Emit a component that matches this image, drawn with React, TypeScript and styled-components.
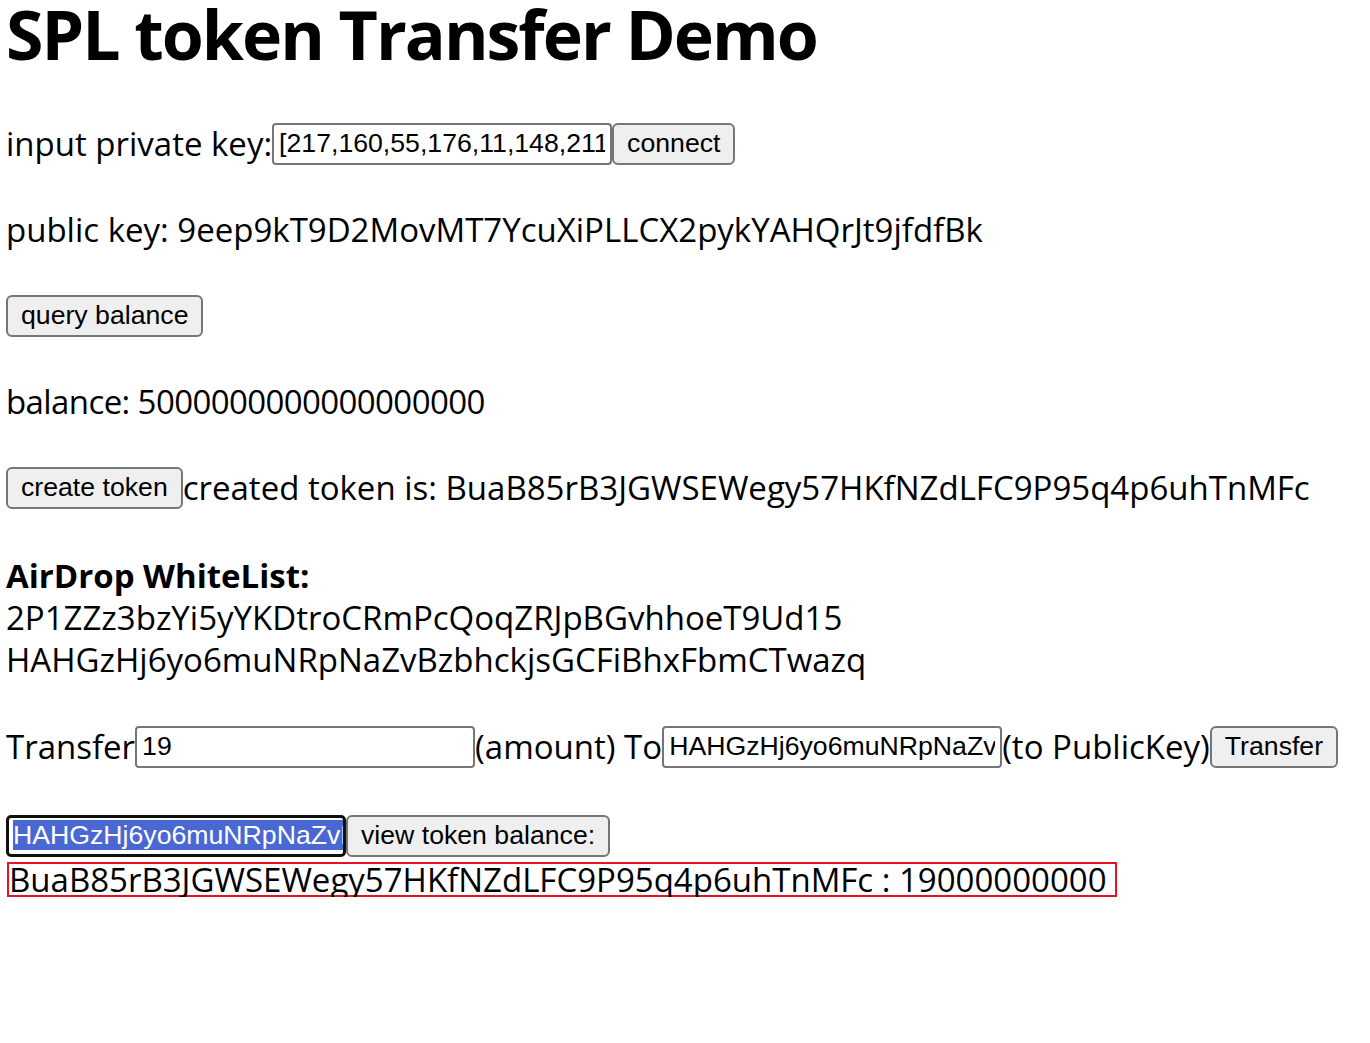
import React from "react";
import styled, { createGlobalStyle } from "styled-components";

const GlobalStyle = createGlobalStyle`
  html, body {
    margin: 0;
    padding: 0;
    background: #ffffff;
  }
  body {
    font-family: "Open Sans", "Noto Sans", sans-serif;
    color: #000000;
  }
`;

const Page = styled.div`
  display: flex;
  flex-direction: column;
  align-items: flex-start;
  padding: 0 0 0 6px;
`;

const Title = styled.h1`
  margin: 0;
  font-size: 68px;
  font-weight: 700;
  letter-spacing: -2px;
  line-height: 1;
  white-space: nowrap;
`;

const Row = styled.div<{ $top: number }>`
  display: flex;
  align-items: center;
  height: 43px;
  margin-top: ${p => p.$top}px;
  font-size: 33px;
  line-height: 43px;
  white-space: nowrap;
`;

const Label = styled.span<{ $tight?: boolean }>`
  display: block;
  letter-spacing: ${p => (p.$tight ? "-0.6px" : "normal")};
`;

const Field = styled.input<{ $width?: number }>`
  box-sizing: border-box;
  width: ${p => p.$width ?? 340}px;
  height: 42px;
  margin: 0;
  padding: 0 5px;
  border: 2px solid #767676;
  border-radius: 4px;
  background: #ffffff;
  font-family: "Liberation Sans", Arial, sans-serif;
  font-size: 26.67px;
  color: #000000;
  outline: none;
`;

const FocusedField = styled.div`
  box-sizing: border-box;
  width: 340px;
  height: 42px;
  padding: 2px 4px;
  border: 3px solid #101010;
  border-radius: 5px;
  overflow: hidden;
  white-space: nowrap;
  font-family: "Liberation Sans", Arial, sans-serif;
  font-size: 26.67px;
  line-height: 31px;
`;

const Selected = styled.span`
  background: #4a68d3;
  color: #ffffff;
`;

const Button = styled.button`
  box-sizing: border-box;
  height: 42px;
  margin: 0;
  padding: 0 13px;
  border: 2px solid #767676;
  border-radius: 6px;
  background: #efefef;
  font-family: "Liberation Sans", Arial, sans-serif;
  font-size: 26.67px;
  color: #000000;
  cursor: pointer;
`;

const WhiteList = styled.div<{ $top: number }>`
  margin-top: ${p => p.$top}px;
  font-size: 33px;
  line-height: 42px;
  white-space: nowrap;
`;

const ListTitle = styled.div`
  font-weight: 700;
`;

const ResultBox = styled.div`
  display: inline-block;
  margin: 5px 0 0 1px;
  padding: 0 8px 0 0;
  border: 2px solid #e81123;
  font-size: 33px;
  line-height: 31px;
  white-space: nowrap;
`;

const privateKey =
  "[217,160,55,176,11,148,211,93,41,201,77,18,240,66,131,9,54,201,33,12,98,145,200,17,63,71,222,5,141,39,88,190]";
const toKey = "HAHGzHj6yo6muNRpNaZvBzbhckjsGCFiBhxFbmCTwazq";
const token = "BuaB85rB3JGWSEWegy57HKfNZdLFC9P95q4p6uhTnMFc";

export default function App() {
  return (
    <>
      <GlobalStyle />
      <Page>
        <Title>SPL token Transfer Demo</Title>

        <Row $top={54}>
          <Label>input private key:</Label>
          <Field defaultValue={privateKey} />
          <Button>connect</Button>
        </Row>

        <Row $top={43}>
          <Label>public key: 9eep9kT9D2MovMT7YcuXiPLLCX2pykYAHQrJt9jfdfBk</Label>
        </Row>

        <Row $top={43}>
          <Button>query balance</Button>
        </Row>

        <Row $top={43}>
          <Label $tight>balance: 5000000000000000000</Label>
        </Row>

        <Row $top={43}>
          <Button>create token</Button>
          <Label>created token is: {token}</Label>
        </Row>

        <WhiteList $top={46}>
          <ListTitle>AirDrop WhiteList:</ListTitle>
          <div>2P1ZZz3bzYi5yYKDtroCRmPcQoqZRJpBGvhhoeT9Ud15</div>
          <div>{toKey}</div>
        </WhiteList>

        <Row $top={44}>
          <Label>Transfer</Label>
          <Field defaultValue="19" />
          <Label>(amount) To</Label>
          <Field defaultValue={toKey} />
          <Label>(to PublicKey)</Label>
          <Button>Transfer</Button>
        </Row>

        <Row $top={46}>
          <FocusedField>
            <Selected>{toKey}</Selected>
          </FocusedField>
          <Button>view token balance:</Button>
        </Row>

        <ResultBox>{token} : 19000000000</ResultBox>
      </Page>
    </>
  );
}
